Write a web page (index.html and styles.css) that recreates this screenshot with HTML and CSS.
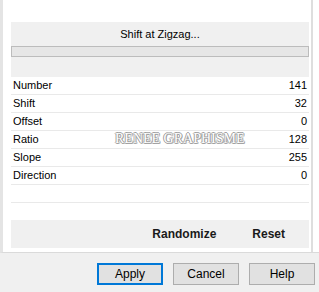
FILE: index.html
```html
<!DOCTYPE html>
<html lang="en">
<head>
    <meta charset="UTF-8">
    <title>Shift at Zigzag</title>
    <link rel="stylesheet" href="styles.css">
</head>
<body>
    <div class="panel">
        <div class="inner">
            <div class="header-box">
                <div class="filter-title">Shift at Zigzag...</div>
                <div class="progress"></div>
            </div>

            <div class="param-list">
                <div class="param-row"><span>Number</span><span>141</span></div>
                <div class="param-row"><span>Shift</span><span>32</span></div>
                <div class="param-row"><span>Offset</span><span>0</span></div>
                <div class="param-row"><span>Ratio</span><span>128</span></div>
                <div class="param-row"><span>Slope</span><span>255</span></div>
                <div class="param-row"><span>Direction</span><span>0</span></div>
                <div class="param-row empty"></div>
                <div class="watermark">RENEE GRAPHISME</div>
            </div>

            <div class="action-box">
                <span class="action">Randomize</span>
                <span class="action">Reset</span>
            </div>
        </div>
    </div>

    <div class="button-bar">
        <button class="btn default">Apply</button>
        <button class="btn">Cancel</button>
        <button class="btn">Help</button>
    </div>
</body>
</html>
```

FILE: styles.css
```css
body {
    margin: 0;
    font-family: "Liberation Sans", Arial, sans-serif;
    font-size: 11px;
    color: #000;
    background-color: #f0f0f0;
    width: 319px;
    height: 292px;
    overflow: hidden;
}
.panel {
    height: 253px;
    box-sizing: border-box;
    background-color: #fff;
    border-left: 3px solid #e4e4e4;
    border-bottom: 1px solid #dadada;
    padding-left: 8px;
}
.inner {
    width: 302px;
    height: 100%;
    box-sizing: border-box;
    padding-top: 22px;
    border-right: 2px solid #dedede;
}
.inner > div {
    width: 298px;
}
/* Header */
.header-box {
    height: 55px;
    box-sizing: border-box;
    background-color: #f0f0f0;
    padding-top: 6px;
}
.filter-title {
    text-align: center;
    line-height: 13px;
    height: 13px;
}
.progress {
    margin-top: 5px;
    height: 11px;
    box-sizing: border-box;
    border: 1px solid #bcbcbc;
    background-color: #e6e6e6;
}
/* Parameters */
.param-list {
    position: relative;
}
.param-row {
    display: flex;
    justify-content: space-between;
    height: 17px;
    line-height: 17px;
    padding: 0 2px;
    border-bottom: 1px solid #e9e9e9;
}
.watermark {
    position: absolute;
    left: 104px;
    top: 54px;
    font-family: "Liberation Serif", "Times New Roman", serif;
    font-size: 14px;
    color: #fff;
    text-shadow: 1px 0 #a0a0a0, -1px 0 #a0a0a0, 0 1px #a0a0a0, 0 -1px #a0a0a0, 1px 1px #b4b4b4;
}
/* Actions */
.action-box {
    margin-top: 17px;
    height: 28px;
    background-color: #f0f0f0;
    display: flex;
    justify-content: flex-end;
    align-items: center;
    gap: 36px;
    padding-right: 24px;
    box-sizing: border-box;
}
.action {
    font-size: 12px;
    font-weight: bold;
    color: #1a1a1a;
}
/* Buttons */
.button-bar {
    display: flex;
    justify-content: flex-end;
    gap: 10px;
    padding: 10px 4px 0 0;
}
.btn {
    width: 66px;
    height: 22px;
    margin: 0;
    padding: 0;
    font-family: "Liberation Sans", Arial, sans-serif;
    font-size: 12px;
    color: #000;
    background-color: #e1e1e1;
    border: 1px solid #adadad;
}
.btn.default {
    border: 2px solid #0078d7;
}
```
